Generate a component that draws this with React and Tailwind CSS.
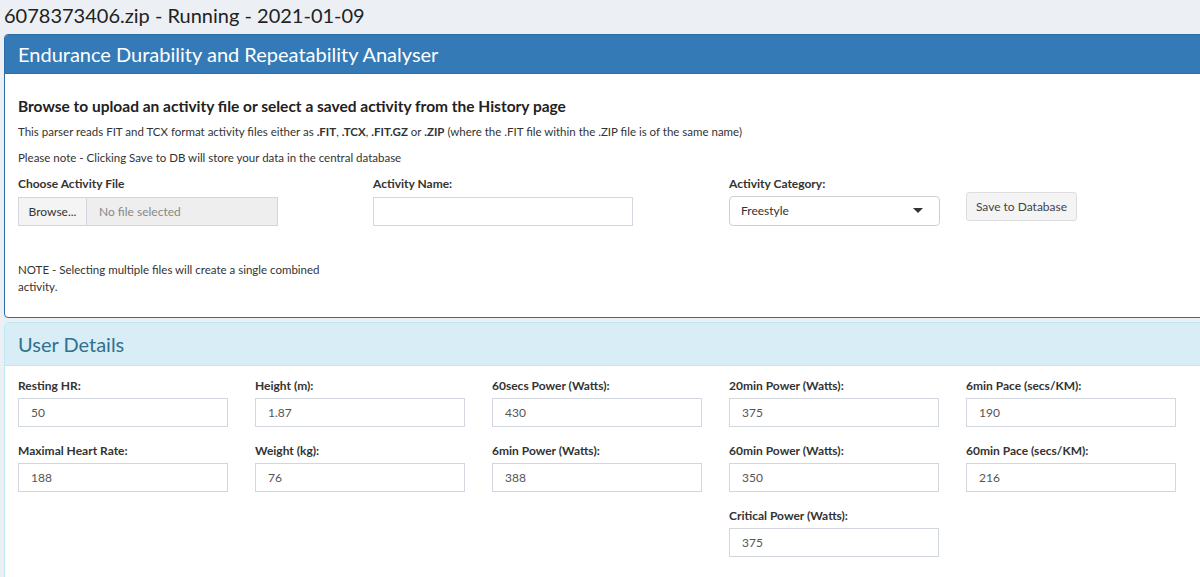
import React from 'react';

const font = { fontFamily: 'Lato, "Liberation Sans", sans-serif' };

const userFields = [
  [
    { label: 'Resting HR:', value: '50' },
    { label: 'Maximal Heart Rate:', value: '188' },
  ],
  [
    { label: 'Height (m):', value: '1.87' },
    { label: 'Weight (kg):', value: '76' },
  ],
  [
    { label: '60secs Power (Watts):', value: '430' },
    { label: '6min Power (Watts):', value: '388' },
  ],
  [
    { label: '20min Power (Watts):', value: '375' },
    { label: '60min Power (Watts):', value: '350' },
    { label: 'Critical Power (Watts):', value: '375' },
  ],
  [
    { label: '6min Pace (secs/KM):', value: '190' },
    { label: '60min Pace (secs/KM):', value: '216' },
  ],
];

function Field({ label, value }) {
  return (
    <div className="mb-[15px]">
      <div className="text-[12px] font-bold text-[#333] leading-[18px] h-[21px]">{label}</div>
      <div className="w-[210px] h-[29px] border border-[#d2d6de] bg-white px-[12px] flex items-center text-[12px] text-[#555]">
        {value}
      </div>
    </div>
  );
}

export default function App() {
  return (
    <div style={font} className="w-full h-[577px] overflow-hidden bg-[#ecf0f5] text-[#333]">
      <div className="h-[34px] pl-[4px] text-[20px] leading-[30px] text-[#222]">
        6078373406.zip - Running - 2021-01-09
      </div>

      {/* analyser box */}
      <div className="ml-[4px] w-[1460px] border border-[#2e6da4] rounded-[4px] bg-white">
        <div className="h-[39px] bg-[#337ab7] text-white text-[20px] leading-[39px] pl-[13px] rounded-t-[3px] border-b border-[#2e6da4]">
          Endurance Durability and Repeatability Analyser
        </div>
        <div className="pl-[13px] pt-[22px] pb-[22px]">
          <div className="text-[15.5px] font-bold text-[#222] leading-[20px]">
            Browse to upload an activity file or select a saved activity from the History page
          </div>
          <div className="text-[11.5px] mt-[7px] leading-[18px]">
            This parser reads FIT and TCX format activity files either as <b>.FIT</b>, <b>.TCX</b>,{' '}
            <b>.FIT.GZ</b> or <b>.ZIP</b> (where the .FIT file within the .ZIP file is of the same name)
          </div>
          <div className="text-[11.5px] mt-[8px] leading-[18px]">
            Please note - Clicking Save to DB will store your data in the central database
          </div>

          <div className="flex mt-[7px]">
            <div className="w-[355px]">
              <div className="text-[12px] font-bold leading-[18px] h-[23px] pt-[1px]">Choose Activity File</div>
              <div className="w-[260px] h-[29px] flex border border-[#d2d6de] bg-[#eeeeee] text-[12px]">
                <div className="w-[68px] flex items-center justify-center border-r border-[#d2d6de] text-[#333] bg-[#f4f4f4]">
                  Browse...
                </div>
                <div className="flex items-center pl-[12px] text-[#888]">No file selected</div>
              </div>
              <div className="text-[11.5px] leading-[17px] w-[320px] mt-[35px]">
                NOTE - Selecting multiple files will create a single combined activity.
              </div>
            </div>
            <div className="w-[356px]">
              <div className="text-[12px] font-bold leading-[18px] h-[23px] pt-[1px]">Activity Name:</div>
              <div className="w-[260px] h-[29px] border border-[#d2d6de] bg-white"></div>
            </div>
            <div className="flex items-start">
              <div>
                <div className="text-[12px] font-bold leading-[18px] h-[22px] pt-[1px]">Activity Category:</div>
                <div className="w-[211px] h-[30px] border border-[#cfcfcf] rounded-[4px] bg-white flex items-center justify-between pl-[11px] pr-[16px] text-[12px]">
                  <span>Freestyle</span>
                  <svg width="10" height="6" viewBox="0 0 10 6">
                    <path d="M0 0 L10 0 L5 5 Z" fill="#333" />
                  </svg>
                </div>
              </div>
              <div className="ml-[26px] mt-[18px] w-[111px] h-[29px] border border-[#ddd] rounded-[3px] bg-[#f4f4f4] flex items-center justify-center text-[12px] text-[#444]">
                Save to Database
              </div>
            </div>
          </div>
        </div>
      </div>

      {/* user details box */}
      <div className="ml-[4px] mt-[4px] w-[1460px] border border-[#bce8f1] rounded-t-[4px] bg-white">
        <div className="h-[43px] bg-[#d9edf7] text-[#31708f] text-[20px] leading-[42px] pl-[13px] border-b border-[#bce8f1]">
          User Details
        </div>
        <div className="flex pl-[13px] pt-[11px] pb-[40px]">
          {userFields.map((col, i) => (
            <div key={i} className="w-[237px]">
              {col.map((f) => (
                <Field key={f.label} {...f} />
              ))}
            </div>
          ))}
        </div>
      </div>
    </div>
  );
}
